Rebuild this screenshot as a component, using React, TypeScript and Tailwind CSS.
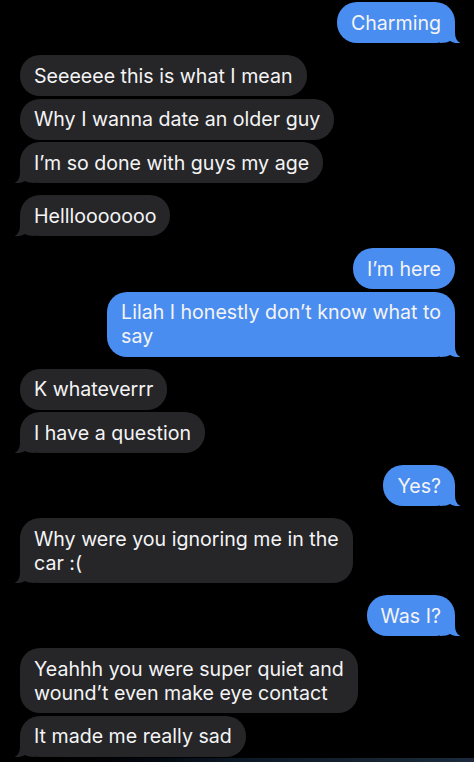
type Msg = { from: 'me' | 'them'; lines: string[] };

// groups of consecutive bubbles; last bubble of a group gets the tail
const groups: Msg[][] = [
  [{ from: 'me', lines: ['Charming'] }],
  [
    { from: 'them', lines: ['Seeeeee this is what I mean'] },
    { from: 'them', lines: ['Why I wanna date an older guy'] },
    { from: 'them', lines: ['I’m so done with guys my age'] },
  ],
  [{ from: 'them', lines: ['Helllooooooo'] }],
  [
    { from: 'me', lines: ['I’m here'] },
    { from: 'me', lines: ['Lilah I honestly don’t know what to', 'say'] },
  ],
  [
    { from: 'them', lines: ['K whateverrr'] },
    { from: 'them', lines: ['I have a question'] },
  ],
  [{ from: 'me', lines: ['Yes?'] }],
  [{ from: 'them', lines: ['Why were you ignoring me in the', 'car :('] }],
  [{ from: 'me', lines: ['Was I?'] }],
  [
    { from: 'them', lines: ['Yeahhh you were super quiet and', 'wound’t even make eye contact'] },
    { from: 'them', lines: ['It made me really sad'] },
  ],
];

function Tail({ side, color }: { side: 'left' | 'right'; color: string }) {
  return (
    <svg
      width="20"
      height="20"
      viewBox="0 0 20 20"
      className={
        side === 'right'
          ? 'pointer-events-none absolute bottom-0 right-[-5px]'
          : 'pointer-events-none absolute bottom-0 left-[-5px] -scale-x-100'
      }
    >
      <path
        d="M15 0 L15 10 C15 15 17 18.5 20.5 20 C17 20.6 13 19.8 10 18 C8 19.3 5 20 0 20 L0 0 Z"
        fill={color}
      />
    </svg>
  );
}

function Bubble({ msg, tail }: { msg: Msg; tail: boolean }) {
  const mine = msg.from === 'me';
  const color = mine ? '#4a8df0' : '#262628';
  return (
    <div className={mine ? 'flex justify-end' : 'flex justify-start'}>
      <div
        className={`relative rounded-[20px] px-[14px] py-[8.5px] text-[19.6px] leading-[24px] text-[#f4f4f6] whitespace-nowrap ${
          mine ? 'bg-[#4a8df0]' : 'bg-[#262628]'
        }`}
      >
        {tail && <Tail side={mine ? 'right' : 'left'} color={color} />}
        <span className="relative">
          {msg.lines.map((l, i) => (
            <span key={i} className="block">
              {l}
            </span>
          ))}
        </span>
      </div>
    </div>
  );
}

export default function App() {
  return (
    <div
      className="flex h-[762px] w-full flex-col overflow-hidden bg-black pl-[20px] pr-[19px] pt-[2px]"
      style={{ fontFamily: 'Inter, "Noto Sans", sans-serif' }}
    >
      <div className="flex flex-col gap-[12px]">
        {groups.map((g, gi) => (
          <div key={gi} className="flex flex-col gap-[2.5px]">
            {g.map((m, mi) => (
              <Bubble key={mi} msg={m} tail={mi === g.length - 1} />
            ))}
          </div>
        ))}
      </div>
      <div className="-ml-[20px] -mr-[19px] mt-auto h-[4px] bg-gradient-to-r from-black via-[#0d1826] to-[#1b2b3b]" />
    </div>
  );
}
